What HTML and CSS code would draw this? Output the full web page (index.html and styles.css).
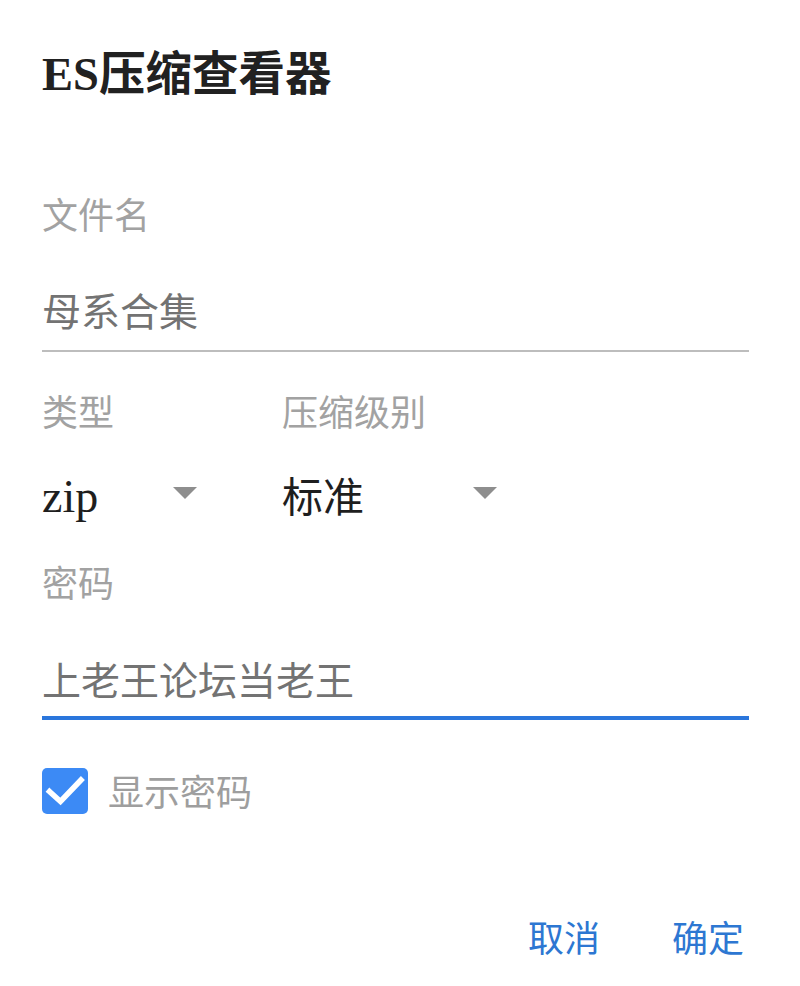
FILE: index.html
```html
<!DOCTYPE html>
<html lang="zh-CN">
<head>
<meta charset="utf-8">
<title>ES压缩查看器</title>
<link rel="stylesheet" href="styles.css">
</head>
<body>
<div class="dialog">
  <h1 class="title">ES压缩查看器</h1>

  <div class="label label-first">文件名</div>
  <div class="input">母系合集</div>

  <div class="selects">
    <div class="col">
      <div class="label">类型</div>
      <div class="spinner spinner-type">
        <span class="value latin">zip</span>
        <span class="arrow"></span>
      </div>
    </div>
    <div class="col">
      <div class="label">压缩级别</div>
      <div class="spinner spinner-level">
        <span class="value">标准</span>
        <span class="arrow"></span>
      </div>
    </div>
  </div>

  <div class="label label-pw">密码</div>
  <div class="input input-focused">上老王论坛当老王</div>

  <label class="check-row">
    <svg class="checkbox" width="46" height="46" viewBox="0 0 46 46" aria-hidden="true">
      <rect x="0" y="0" width="46" height="46" rx="5" ry="5" fill="#3c8af5"/>
      <polyline points="7.5,23.5 18.5,33.5 39,12" fill="none" stroke="#ffffff" stroke-width="5.5" stroke-linecap="square" stroke-linejoin="miter"/>
    </svg>
    <span class="check-text">显示密码</span>
  </label>

  <div class="actions">
    <span class="btn">取消</span>
    <span class="btn">确定</span>
  </div>
</div>
</body>
</html>
```

FILE: styles.css
```css
html, body {
  margin: 0;
  padding: 0;
  background: #ffffff;
}

body {
  font-family: "Liberation Serif", "Noto Sans CJK SC", serif;
  width: 800px;
  height: 986px;
  overflow: hidden;
}

.dialog {
  padding: 45px 51px 0 42px;
}

.title {
  margin: 0;
  font-size: 46.5px;
  line-height: 60px;
  height: 60px;
  font-weight: 700;
  color: #212121;
}

.label {
  font-family: "Noto Sans CJK SC", sans-serif;
  font-size: 36px;
  line-height: 46px;
  height: 46px;
  padding-bottom: 4px;
  color: #a2a2a2;
}

.label-first {
  margin-top: 85px;
}

.input {
  font-family: "Noto Sans CJK SC", sans-serif;
  font-size: 39px;
  line-height: 50px;
  color: #737373;
  padding: 44px 0 16px;
  border-bottom: 2px solid #bdbdbd;
}

.input-focused {
  padding: 45px 0 13px;
  border-bottom: 4px solid #2a76dc;
}

.selects {
  display: grid;
  grid-template-columns: 163px 223px;
  column-gap: 77px;
  margin-top: 35px;
}

.spinner {
  display: flex;
  align-items: center;
  justify-content: space-between;
  height: 50px;
  margin-top: 34px;
  padding-right: 8px;
}

.value {
  font-family: "Noto Sans CJK SC", sans-serif;
  font-size: 41px;
  line-height: 50px;
  color: #1e1e1e;
  margin-top: -4px;
}

.value.latin {
  font-family: "Liberation Serif", serif;
  font-size: 46px;
  margin-top: 2px;
}

.arrow {
  width: 0;
  height: 0;
  border-left: 12px solid transparent;
  border-right: 12px solid transparent;
  border-top: 12px solid #8e8e8e;
  margin-top: -6px;
}

.label-pw {
  margin-top: 37px;
}

.check-row {
  display: flex;
  align-items: center;
  height: 46px;
  margin-top: 48px;
  gap: 20px;
}

.checkbox {
  display: block;
  flex: none;
}

.check-text {
  font-family: "Noto Sans CJK SC", sans-serif;
  font-size: 36px;
  line-height: 46px;
  color: #9e9e9e;
  margin-top: -2px;
}

.actions {
  display: flex;
  justify-content: flex-end;
  gap: 72px;
  margin-top: 97px;
  padding-right: 5px;
}

.btn {
  font-family: "Noto Sans CJK SC", sans-serif;
  font-size: 36px;
  line-height: 50px;
  color: #2d77d2;
}
```
